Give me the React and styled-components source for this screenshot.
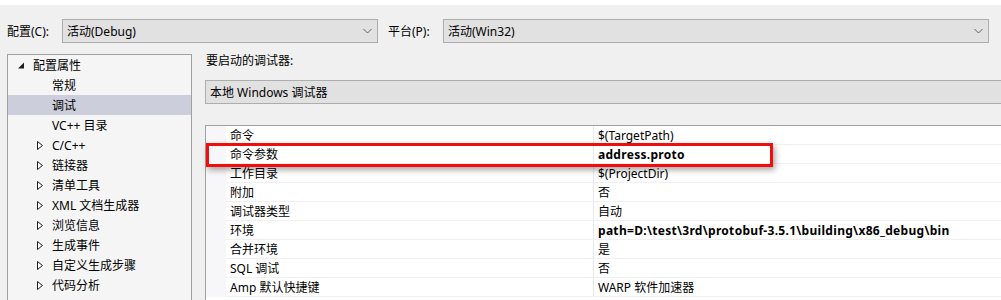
import React from 'react';
import styled, { createGlobalStyle } from 'styled-components';

const GlobalStyle = createGlobalStyle`
  html, body {
    margin: 0;
    padding: 0;
    background: #f0f0f0;
  }
  body {
    font-family: 'Noto Sans', 'Noto Sans CJK SC', sans-serif;
    font-size: 12px;
    color: #000;
  }
`;

const Page = styled.div`
  width: 1001px;
  height: 300px;
  overflow: hidden;
  background: #f0f0f0;
  border-top: 5px solid #ffffff;
  box-sizing: border-box;
`;

const Toolbar = styled.div`
  display: flex;
  align-items: center;
  height: 24px;
  margin-top: 14px;
  padding-left: 7px;
`;

const Label = styled.span`
  white-space: nowrap;
  width: ${p => p.width}px;
  flex: none;
  margin-left: ${p => p.offset || 0}px;
`;

const Combo = styled.div`
  display: flex;
  align-items: center;
  justify-content: space-between;
  box-sizing: border-box;
  height: 24px;
  width: ${p => (p.width ? `${p.width}px` : 'auto')};
  flex: none;
  background: #e1e1e1;
  border: 1px solid #adadad;
  padding: 0 5px 0 4px;
  white-space: nowrap;
`;

const Chevron = () => (
  <svg width="9" height="6" viewBox="0 0 9 6">
    <polyline points="0.5,1 4.5,5 8.5,1" fill="none" stroke="#606060" strokeWidth="1" />
  </svg>
);

const Main = styled.div`
  display: flex;
  margin-top: 11px;
  height: 260px;
`;

const Tree = styled.div`
  width: 185px;
  margin-left: 7px;
  box-sizing: border-box;
  background: #f5f5f5;
  border: 1px solid #a0a0a0;
  border-bottom: none;
  flex: none;
`;

const TreeItem = styled.div`
  display: flex;
  align-items: center;
  height: 20px;
  padding-left: ${p => p.indent}px;
  background: ${p => (p.selected ? '#cccedb' : 'transparent')};
  white-space: nowrap;
`;

const Twist = styled.span`
  width: 15px;
  display: flex;
  align-items: center;
  flex: none;
`;

const Expanded = () => (
  <svg width="7" height="7" viewBox="0 0 7 7">
    <polygon points="6,0.5 6,6.5 0,6.5" fill="#1e1e1e" />
  </svg>
);

const Collapsed = () => (
  <svg width="6" height="9" viewBox="0 0 6 9">
    <polygon points="0.5,0.5 5.5,4.5 0.5,8.5" fill="#fff" stroke="#1e1e1e" strokeWidth="1" />
  </svg>
);

const Right = styled.div`
  flex: 1;
  margin-left: 13px;
  margin-right: -20px;
  display: flex;
  flex-direction: column;
`;

const Caption = styled.div`
  height: 16px;
  line-height: 16px;
  padding-left: 1px;
  margin-top: -1px;
`;

const DebuggerCombo = styled(Combo)`
  margin-top: 11px;
`;

const Grid = styled.div`
  position: relative;
  margin-top: 21px;
  border-top: 1px solid #a0a0a0;
  border-left: 1px solid #a0a0a0;
  background: #ffffff;
  flex: 1;
`;

const Row = styled.div`
  display: flex;
  height: 19px;
`;

const Gutter = styled.div`
  width: 20px;
  flex: none;
  background: #f7f7f9;
`;

const NameCell = styled.div`
  width: 368px;
  flex: none;
  box-sizing: border-box;
  padding: 2px 0 0 4px;
  line-height: 16px;
  border-bottom: 1px solid #f0f0f4;
  border-right: 1px solid #e8e8ee;
  white-space: nowrap;
`;

const ValueCell = styled.div`
  flex: 1;
  box-sizing: border-box;
  padding: 2px 0 0 4px;
  line-height: 16px;
  border-bottom: 1px solid #f0f0f4;
  font-weight: ${p => (p.bold ? 700 : 400)};
  letter-spacing: ${p => (p.bold ? '0.3px' : 'normal')};
  white-space: nowrap;
`;

const Highlight = styled.div`
  position: absolute;
  left: 0;
  top: 17px;
  width: 567px;
  height: 24px;
  box-sizing: border-box;
  border: 3px solid #f20d0d;
  box-shadow: 2px 3px 6px rgba(0, 0, 0, 0.35);
  pointer-events: none;
`;

const treeItems = [
  { label: '配置属性', level: 0, expanded: true },
  { label: '常规', level: 1 },
  { label: '调试', level: 1, selected: true },
  { label: 'VC++ 目录', level: 1 },
  { label: 'C/C++', level: 1, collapsed: true },
  { label: '链接器', level: 1, collapsed: true },
  { label: '清单工具', level: 1, collapsed: true },
  { label: 'XML 文档生成器', level: 1, collapsed: true },
  { label: '浏览信息', level: 1, collapsed: true },
  { label: '生成事件', level: 1, collapsed: true },
  { label: '自定义生成步骤', level: 1, collapsed: true },
  { label: '代码分析', level: 1, collapsed: true },
];

const props = [
  ['命令', '$(TargetPath)'],
  ['命令参数', 'address.proto', true],
  ['工作目录', '$(ProjectDir)'],
  ['附加', '否'],
  ['调试器类型', '自动'],
  ['环境', 'path=D:\\test\\3rd\\protobuf-3.5.1\\building\\x86_debug\\bin', true],
  ['合并环境', '是'],
  ['SQL 调试', '否'],
  ['Amp 默认快捷键', 'WARP 软件加速器'],
];

export default function App() {
  return (
    <Page>
      <GlobalStyle />
      <Toolbar>
        <Label width={55}>配置(C):</Label>
        <Combo width={316}>
          <span>活动(Debug)</span>
          <Chevron />
        </Combo>
        <Label width={55} offset={10}>平台(P):</Label>
        <Combo width={546}>
          <span>活动(Win32)</span>
          <Chevron />
        </Combo>
      </Toolbar>
      <Main>
        <Tree>
          {treeItems.map(item => (
            <TreeItem
              key={item.label}
              indent={item.level === 0 ? 10 : 29}
              selected={item.selected}
            >
              <Twist>
                {item.expanded && <Expanded />}
                {item.collapsed && <Collapsed />}
              </Twist>
              <span>{item.label}</span>
            </TreeItem>
          ))}
        </Tree>
        <Right>
          <Caption>要启动的调试器:</Caption>
          <DebuggerCombo width={820}>
            <span>本地 Windows 调试器</span>
          </DebuggerCombo>
          <Grid>
            {props.map(([name, value, bold]) => (
              <Row key={name}>
                <Gutter />
                <NameCell>{name}</NameCell>
                <ValueCell bold={bold}>{value}</ValueCell>
              </Row>
            ))}
            <Highlight />
          </Grid>
        </Right>
      </Main>
    </Page>
  );
}
